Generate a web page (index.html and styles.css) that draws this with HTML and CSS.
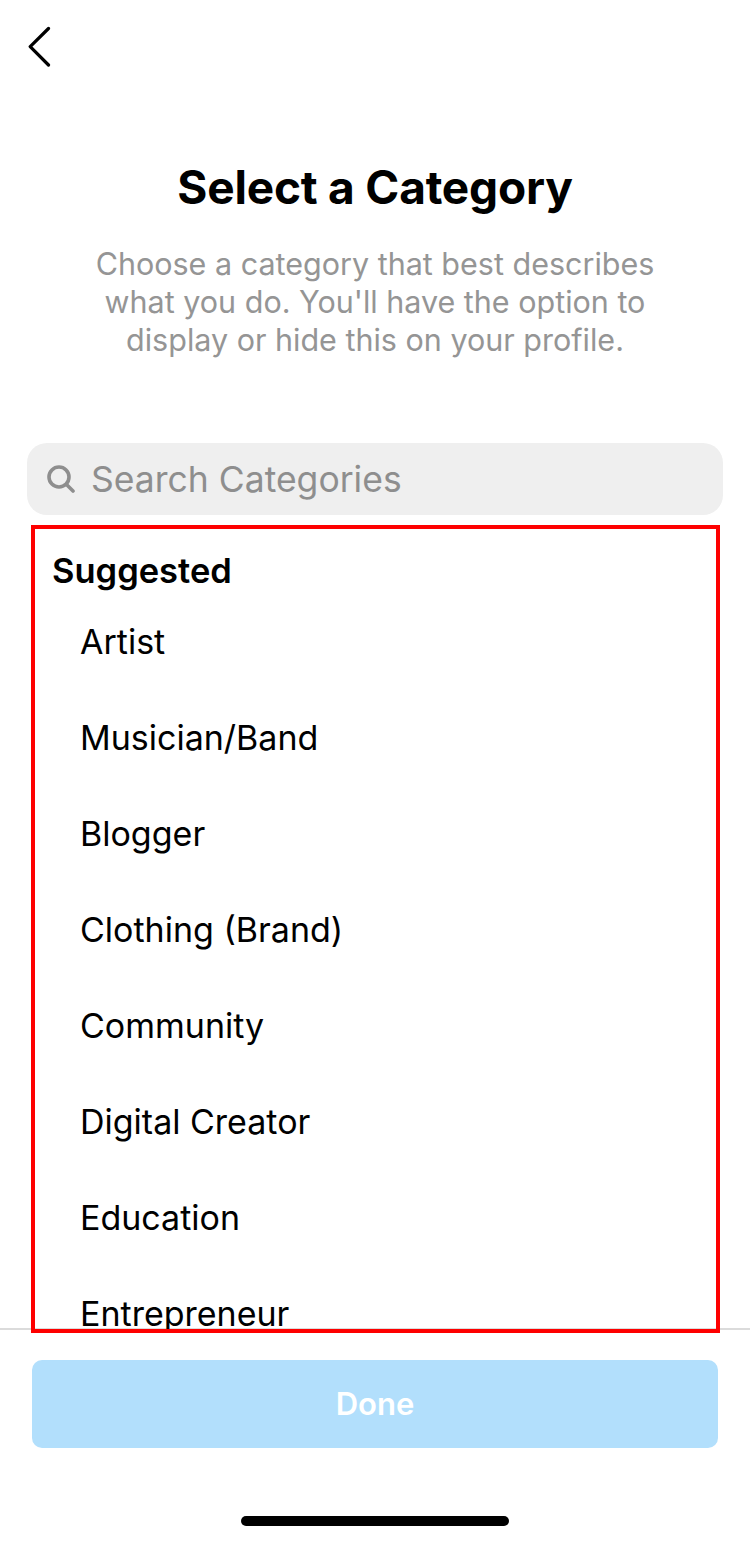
FILE: index.html
```html
<!DOCTYPE html>
<html lang="en">
<head>
<meta charset="utf-8">
<title>Select a Category</title>
<link rel="stylesheet" href="styles.css">
</head>
<body>
<div class="screen">
  <header class="topbar">
    <svg class="back" width="24" height="42" viewBox="0 0 24 42" fill="none"><path d="M20.5 2.5 L2.2 20.6 L20.5 39" stroke="#000" stroke-width="3.2" stroke-linecap="round" stroke-linejoin="round"/></svg>
  </header>
  <section class="intro">
    <h1 class="title">Select a Category</h1>
    <p class="subtitle">Choose a category that best describes<br>what you do. You'll have the option to<br>display or hide this on your profile.</p>
  </section>
  <div class="search">
    <svg class="search-icon" width="28" height="28" viewBox="0 0 28 28" fill="none"><circle cx="12" cy="12" r="10" stroke="#8e8e8e" stroke-width="3.6"/><path d="M19.5 19.5 L26 26" stroke="#8e8e8e" stroke-width="3.6" stroke-linecap="round"/></svg>
    <span class="search-text">Search Categories</span>
  </div>
  <section class="list">
    <h2 class="list-head">Suggested</h2>
    <ul class="items">
      <li class="item">Artist</li>
      <li class="item">Musician/Band</li>
      <li class="item">Blogger</li>
      <li class="item">Clothing (Brand)</li>
      <li class="item">Community</li>
      <li class="item">Digital Creator</li>
      <li class="item">Education</li>
      <li class="item">Entrepreneur</li>
    </ul>
  </section>
  <footer class="footer">
    <button class="done">Done</button>
    <div class="home-bar"></div>
  </footer>
</div>
</body>
</html>
```
FILE: styles.css
```css
* { box-sizing: border-box; }
html, body { margin: 0; padding: 0; background: #fff; }
body { font-family: Inter, "Liberation Sans", sans-serif; color: #000; }
.screen { width: 750px; height: 1542px; overflow: hidden; display: flex; flex-direction: column; }
.topbar { height: 130px; padding: 26px 0 0 28px; }
.back { display: block; }
.intro { height: 313px; padding-top: 29px; text-align: center; }
.title { margin: 0; font-size: 46px; line-height: 56px; font-weight: 700; letter-spacing: -0.2px; }
.subtitle { margin: 30px 0 0; font-size: 30.5px; line-height: 38px; color: #959595; }
.search { margin: 0 27px; height: 72px; border-radius: 20px; background: #efefef; display: flex; align-items: center; padding-left: 20px; gap: 16px; }
.search-icon { display: block; flex: none; }
.search-text { font-size: 35.5px; color: #8e8e8e; }
.list { position: relative; z-index: 1; margin: 10px 30px 0 31px; height: 808px; border: 4px solid #fe0000; overflow: hidden; padding: 22px 0 0 17px; }
.list-head { margin: 0 0 20px; font-size: 34.5px; line-height: 40px; font-weight: 600; }
.items { list-style: none; margin: 0; padding: 0 0 0 28px; }
.item { height: 96px; line-height: 62px; font-size: 34px; }
.footer { margin-top: -5px; border-top: 2px solid #dbdbdb; padding: 30px 32px 0; }
.done { display: block; width: 100%; height: 88px; border: 0; border-radius: 10px; padding: 0 0 2px; background: #b2dffc; color: #fff; font: 600 31px Inter, "Liberation Sans", sans-serif; }
.home-bar { width: 268px; height: 10px; border-radius: 5px; background: #000; margin: 68px auto 0; }
```
